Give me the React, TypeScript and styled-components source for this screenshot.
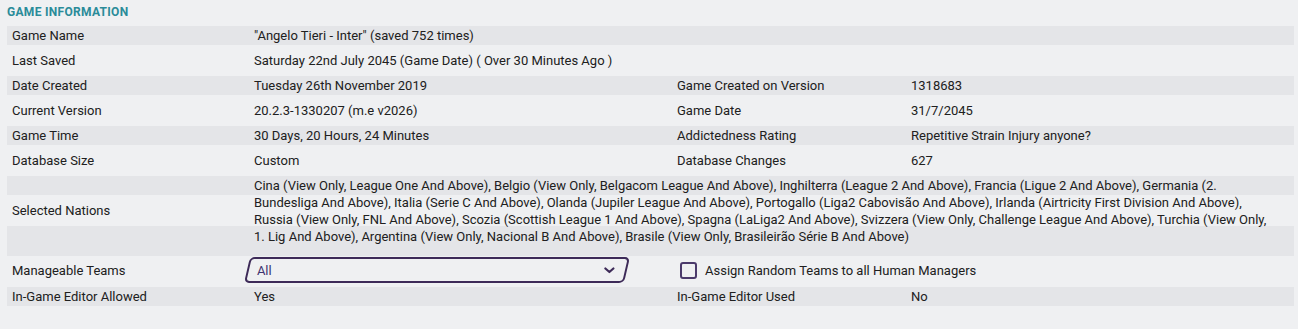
import styled, { createGlobalStyle } from "styled-components";

const GlobalStyle = createGlobalStyle`
  body {
    margin: 0;
    background: #eff0f2;
    font-family: Roboto, "Liberation Sans", sans-serif;
    color: #202020;
  }
`;

const Panel = styled.div`
  width: 1298px;
  height: 329px;
  padding: 5px 4px 0 7px;
  box-sizing: border-box;
  overflow: hidden;
`;

const Title = styled.h2`
  margin: 0;
  height: 18px;
  font-size: 12px;
  line-height: 14px;
  font-weight: 700;
  letter-spacing: 0.3px;
  color: #2a8b99;
  text-transform: uppercase;
`;

const Table = styled.div`
  display: flex;
  flex-direction: column;
`;

const Row = styled.div<{ $shaded?: boolean }>`
  display: grid;
  grid-template-columns: 242px 423px 234px 1fr;
  align-items: center;
  height: 19px;
  margin: 3px 0;
  padding-left: 5px;
  font-size: 13px;
  background: ${(p) => (p.$shaded ? "#e4e5e8" : "transparent")};
`;

const NationsRow = styled.div`
  display: grid;
  grid-template-columns: 242px 1fr;
  align-items: center;
  height: 83px;
  padding: 3px 12px 11px 5px;
  box-sizing: border-box;
  font-size: 13px;
  background: linear-gradient(
    to bottom,
    transparent 0 3px,
    #e4e5e8 3px 22px,
    transparent 22px 53px,
    #e4e5e8 53px 83px
  );
`;

const TeamsRow = styled.div`
  display: grid;
  grid-template-columns: 232px 436px 1fr;
  align-items: center;
  height: 28px;
  padding-left: 5px;
  font-size: 13px;
`;

const Cell = styled.div<{ $span?: number }>`
  white-space: nowrap;
  grid-column: ${(p) => (p.$span ? `span ${p.$span}` : "auto")};
`;

const NationLines = styled.div`
  line-height: 17px;
`;

const Line = styled.div`
  white-space: nowrap;
`;

const Select = styled.div`
  height: 26px;
  width: 380px;
  margin-left: 3px;
  box-sizing: border-box;
  border: 2px solid #3d2a58;
  border-radius: 5px;
  transform: skewX(-13deg);
  display: flex;
  align-items: center;
  justify-content: space-between;
  padding: 0 10px 0 8px;
`;

const SelectInner = styled.div`
  transform: skewX(13deg);
  display: flex;
  align-items: center;
  color: #3e3470;
`;

const CheckWrap = styled.label`
  display: flex;
  align-items: center;
  gap: 8px;
`;

const Box = styled.span`
  width: 17px;
  height: 17px;
  box-sizing: border-box;
  border: 2px solid #4b3a6b;
  border-radius: 3px;
`;

const nations = [
  "Cina (View Only, League One And Above), Belgio (View Only, Belgacom League And Above), Inghilterra (League 2 And Above), Francia (Ligue 2 And Above), Germania (2.",
  "Bundesliga And Above), Italia (Serie C And Above), Olanda (Jupiler League And Above), Portogallo (Liga2 Cabovisão And Above), Irlanda (Airtricity First Division And Above),",
  "Russia (View Only, FNL And Above), Scozia (Scottish League 1 And Above), Spagna (LaLiga2 And Above), Svizzera (View Only, Challenge League And Above), Turchia (View Only,",
  "1. Lig And Above), Argentina (View Only, Nacional B And Above), Brasile (View Only, Brasileirão Série B And Above)",
];

const pairs: [string, string, string, string][] = [
  ["Date Created", "Tuesday 26th November 2019", "Game Created on Version", "1318683"],
  ["Current Version", "20.2.3-1330207 (m.e v2026)", "Game Date", "31/7/2045"],
  ["Game Time", "30 Days, 20 Hours, 24 Minutes", "Addictedness Rating", "Repetitive Strain Injury anyone?"],
  ["Database Size", "Custom", "Database Changes", "627"],
];

function Chevron() {
  return (
    <svg width="11" height="7" viewBox="0 0 11 7">
      <path d="M1.5 1.5 L5.5 5 L9.5 1.5" fill="none" stroke="#3d2a58" strokeWidth="2.2" strokeLinecap="round" strokeLinejoin="round" />
    </svg>
  );
}

export default function App() {
  return (
    <>
      <GlobalStyle />
      <Panel>
        <Title>Game Information</Title>
        <Table>
          <Row $shaded>
            <Cell>Game Name</Cell>
            <Cell $span={3}>"Angelo Tieri - Inter" (saved 752 times)</Cell>
          </Row>
          <Row>
            <Cell>Last Saved</Cell>
            <Cell $span={3}>Saturday 22nd July 2045 (Game Date) ( Over 30 Minutes Ago )</Cell>
          </Row>
          {pairs.map((p, i) => (
            <Row key={p[0]} $shaded={i % 2 === 0}>
              <Cell>{p[0]}</Cell>
              <Cell>{p[1]}</Cell>
              <Cell>{p[2]}</Cell>
              <Cell>{p[3]}</Cell>
            </Row>
          ))}
          <NationsRow>
            <Cell>Selected Nations</Cell>
            <NationLines>
              {nations.map((n) => (
                <Line key={n}>{n}</Line>
              ))}
            </NationLines>
          </NationsRow>
          <TeamsRow>
            <Cell>Manageable Teams</Cell>
            <Select>
              <SelectInner>All</SelectInner>
              <SelectInner>
                <Chevron />
              </SelectInner>
            </Select>
            <CheckWrap>
              <Box />
              Assign Random Teams to all Human Managers
            </CheckWrap>
          </TeamsRow>
          <Row $shaded>
            <Cell>In-Game Editor Allowed</Cell>
            <Cell>Yes</Cell>
            <Cell>In-Game Editor Used</Cell>
            <Cell>No</Cell>
          </Row>
        </Table>
      </Panel>
    </>
  );
}
